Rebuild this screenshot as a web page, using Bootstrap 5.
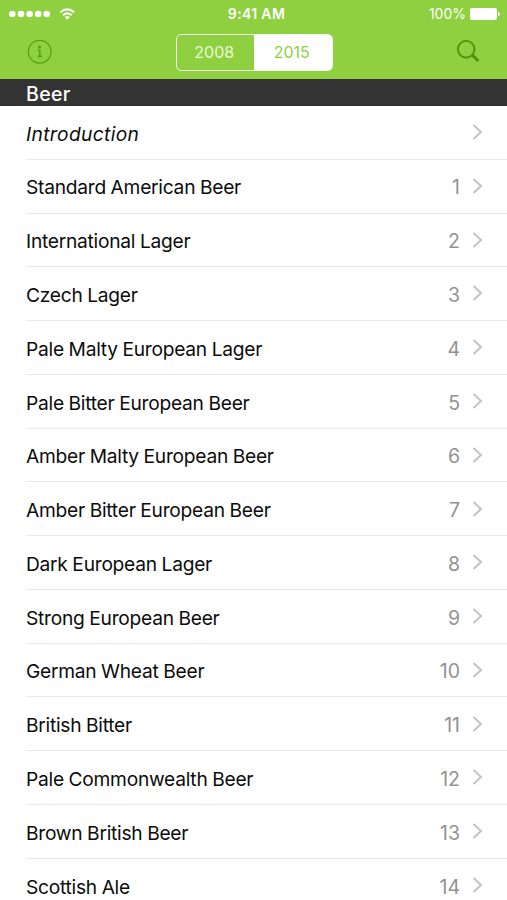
<!DOCTYPE html>
<html lang="en">
<head>
<meta charset="utf-8">
<meta name="viewport" content="width=device-width, initial-scale=1">
<title>Beer Styles</title>
<link href="https://cdn.jsdelivr.net/npm/bootstrap@5.3.0/dist/css/bootstrap.min.css" rel="stylesheet">
<style>
  body { font-family: Inter, "Liberation Sans", sans-serif; color: #111; height: 900px; overflow: hidden; background: #fff; }
  .app-top { background: #8ed03f; height: 79px; }
  .status { height: 28px; font-size: 14px; line-height: 28px; color: #fff; padding: 0 7px 0 9px; }
  .status > div { flex: 1 1 0; }
  .clock { font-weight: 600; font-size: 14px; letter-spacing: .35px; padding-left: 4px; }
  .tools { height: 48px; padding: 0 27px 0 27px; }
  .year-switch { width: 157px; height: 37px; border: 1.5px solid #f4fbe9; border-radius: 5px; overflow: hidden; }
  .year-switch .btn { border: 0; border-radius: 0; padding: 0 2px 0 0; font-size: 16px; line-height: 34px; color: #eaf8d6; width: 50%; }
  .year-switch .btn.active { background: #fff; color: #8ed03f; }
  .section-head { background: #333; color: #fff; height: 27px; line-height: 30px; font-size: 19.5px; font-weight: 500; letter-spacing: .35px; padding-left: 26px; }
  .styles-list { padding-left: 26px; }
  .styles-list .list-group-item { height: 53.77px; padding: 2.6px 24px 0 0; border: 0; border-bottom: 1px solid #e9e9e9; font-size: 19.5px; line-height: 28px; color: #0c0c0c; background: #fff; }
  .style-name { font-size: 19.2px; letter-spacing: -.26px; word-spacing: -.4px; }
  .style-name.fst-italic { letter-spacing: .35px; }
  .num { color: #929292; margin-right: 12px; }
  .chevron { margin-bottom: 3px; }
  .battery { margin-left: 4px; }
</style>
</head>
<body>
<header class="app-top">
  <div class="status d-flex align-items-center">
    <div class="d-flex align-items-center">
      <svg width="42" height="8" fill="#fff"><circle cx="3.3" cy="4" r="3.3"/><circle cx="12" cy="4" r="3.3"/><circle cx="20.6" cy="4" r="3.3"/><circle cx="29.2" cy="4" r="3.3"/><circle cx="37.7" cy="4" r="3.3"/></svg>
      <svg class="ms-2" width="17" height="13" viewBox="0 0 17 13" fill="none" stroke="#fff" stroke-width="2.1"><path d="M1.5 4.2Q8.3-1.3 15.1 4.2M4 7.2Q8.3 3.7 12.6 7.2"/><path d="M8.3 11.7 5.6 9Q8.3 7 11 9Z" fill="#fff" stroke="none"/></svg>
    </div>
    <span class="clock">9:41 AM</span>
    <div class="d-flex align-items-center justify-content-end">
      <span>100%</span>
      <svg class="battery" width="30" height="12" fill="#fff"><rect width="27" height="12" rx="2"/><path d="M28 4Q30 4.5 30 6T28 8Z"/></svg>
    </div>
  </div>
  <div class="tools d-flex align-items-center justify-content-between">
    <svg width="25" height="25" viewBox="0 0 25 25" fill="none" stroke="#59a00d" stroke-width="1.3"><circle cx="12.7" cy="11.7" r="11.4"/><circle cx="12.6" cy="7" r="1.5" fill="#59a00d" stroke="none"/><path d="M10.8 10.3H12.8V16.4M10.8 16.4H15" stroke-width="1.6"/></svg>
    <div class="year-switch d-flex">
      <button type="button" class="btn">2008</button>
      <button type="button" class="btn active">2015</button>
    </div>
    <svg width="24" height="24" viewBox="0 0 24 24" fill="none" stroke="#4f9008"><circle cx="10.2" cy="9.2" r="8.3" stroke-width="1.8"/><path d="M16 14.8 22.3 21" stroke-width="2.8"/></svg>
  </div>
</header>
<h1 class="section-head m-0">Beer</h1>
<main class="styles-list">
  <div class="list-group list-group-flush" id="styles"></div>
</main>
<script src="https://cdn.jsdelivr.net/npm/bootstrap@5.3.0/dist/js/bootstrap.bundle.min.js"></script>
<script>
  const names = ["Introduction", "Standard American Beer", "International Lager", "Czech Lager",
    "Pale Malty European Lager", "Pale Bitter European Beer", "Amber Malty European Beer",
    "Amber Bitter European Beer", "Dark European Lager", "Strong European Beer", "German Wheat Beer",
    "British Bitter", "Pale Commonwealth Beer", "Brown British Beer", "Scottish Ale"];
  document.getElementById("styles").innerHTML = names.map((name, i) => `
    <a href="#" class="list-group-item d-flex align-items-center">
      <span class="style-name me-auto${i ? "" : " fst-italic"}">${name}</span>
      <span class="num">${i || ""}</span>
      <svg class="chevron" width="11" height="16" viewBox="0 0 11 16" fill="none" stroke="#c3c3c3" stroke-width="2"><path d="M1.5 1 9 8 1.5 15"/></svg>
    </a>`).join("");
</script>
</body>
</html>
